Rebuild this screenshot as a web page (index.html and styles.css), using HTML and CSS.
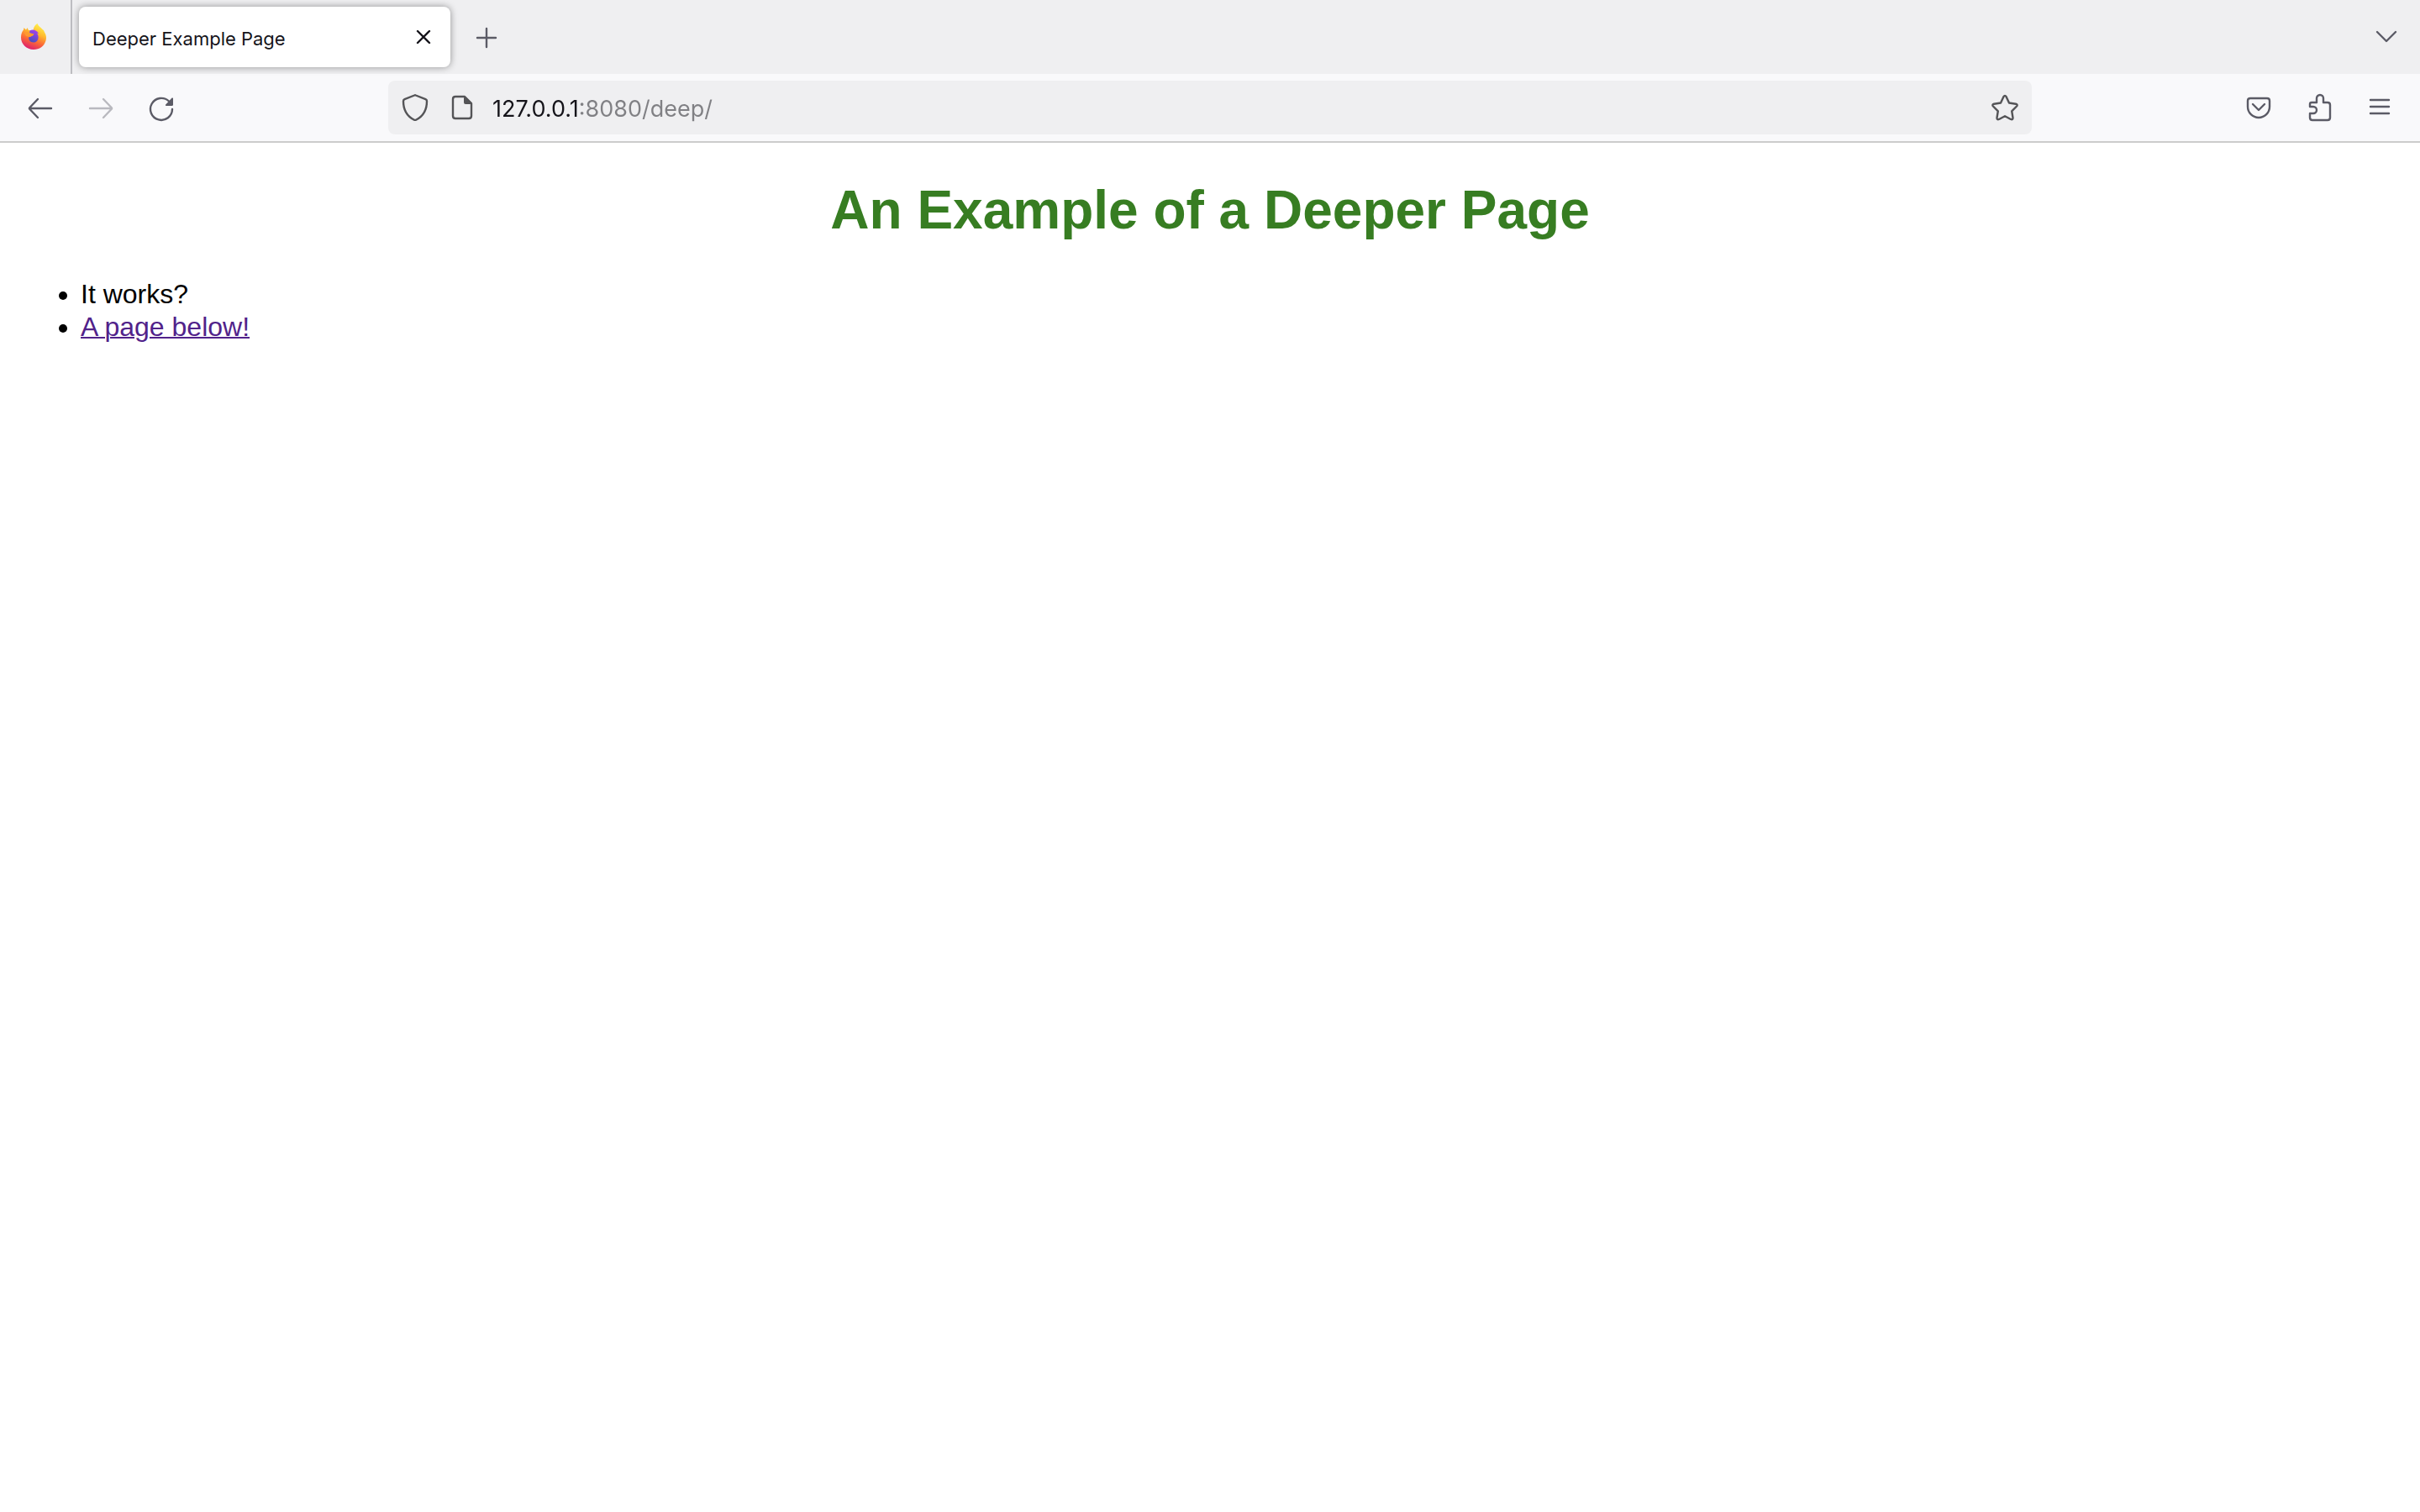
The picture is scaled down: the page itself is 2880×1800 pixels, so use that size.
FILE: index.html
```html
<!DOCTYPE html>
<html lang="en">
<head>
<meta charset="utf-8">
<title>Deeper Example Page</title>
<link rel="stylesheet" href="styles.css">
</head>
<body>
<header class="browser">
  <div class="tab-bar">
    <button class="firefox-view" aria-label="Firefox View">
      <svg class="icon" viewBox="0 0 32 32">
        <defs>
          <linearGradient id="flame" x1="0.75" y1="0.05" x2="0.35" y2="1">
            <stop offset="0" stop-color="#fff04c"/>
            <stop offset="0.35" stop-color="#ffb92f"/>
            <stop offset="0.65" stop-color="#fb6a36"/>
            <stop offset="1" stop-color="#dd1c70"/>
          </linearGradient>
          <linearGradient id="globe" x1="0.7" y1="0" x2="0.3" y2="1">
            <stop offset="0" stop-color="#a540f0"/>
            <stop offset="1" stop-color="#4550bd"/>
          </linearGradient>
        </defs>
        <path fill="url(#flame)" d="M20.500 0C22 4 25 4.500 27 7.500C28 7.500 28.500 9 29 10.500C31 13 31.500 17 30.500 20.500C28.500 27 23 31 16 31C7.500 31 1 24.500 1 16.500C1 12 2.500 9.500 4 7.500L4.500 5L7 7.500L8.500 5L10 8L15.500 8C16 4 18 1.500 20.500 0Z"/>
        <path fill="url(#globe)" d="M11.500 8.500C15 6.500 20 8 22 12L20 11.500C23 15 22 22.500 16 22.500C12 22.500 10 19.500 10 16.500L15 14.500L16 12.500L11 11Z"/>
        <path fill="#ff9a2f" d="M5 11C7 9 9 10 11 11.800L16.500 12.300C16 14.500 13.500 14.500 12 16L7 15Z"/>
      </svg>
    </button>
    <div class="tab">
      <span class="tab-title">Deeper Example Page</span>
      <button class="tab-close" aria-label="Close tab">
        <svg class="icon" viewBox="0 0 32 32"><path class="line" d="M9 9 23 23M23 9 9 23"/></svg>
      </button>
    </div>
    <button class="tool new-tab" aria-label="New tab">
      <svg class="icon" viewBox="0 0 32 32"><path class="line" d="M16 6V28M5 17H27"/></svg>
    </button>
    <button class="tool all-tabs" aria-label="List all tabs">
      <svg class="icon" viewBox="0 0 32 32"><path class="line" d="M5 10 16 21 27 10"/></svg>
    </button>
  </div>
  <nav class="nav-bar" aria-label="Navigation">
    <div class="tools">
      <button class="tool" aria-label="Back">
        <svg class="icon" viewBox="0 0 32 32"><path class="line" d="M29 17H3M13 6 3 16.500V17.500L13 28"/></svg>
      </button>
      <button class="tool" aria-label="Forward" disabled>
        <svg class="icon" viewBox="0 0 32 32"><path class="line" d="M3 17H29M19 6 29 16.500V17.500L19 28"/></svg>
      </button>
      <button class="tool" aria-label="Reload">
        <svg class="icon" viewBox="0 0 32 32"><path class="line" d="M29 18A13 13 0 1 1 25 8.500"/><path fill="currentColor" d="M30 5V12.500Q30 14 28.500 14H21.500Q20.500 13.500 21.200 12.500L28.600 4.600Q30 4 30 5Z"/></svg>
      </button>
    </div>
    <div class="address">
      <svg class="icon" viewBox="0 0 32 32"><path class="line" d="M15.200 1.500 3.500 6.200Q2 6.800 2 8.500C2 18 5 25.500 14.500 30.500Q16 31.300 17.500 30.500C27 25.500 30 18 30 8.500Q30 6.800 28.500 6.200L16.800 1.500Q16 1 15.200 1.500Z"/></svg>
      <svg class="icon page-icon" viewBox="0 0 32 32"><path class="line" d="M8 3H19L27 11V26Q27 29 24 29H8Q5 29 5 26V6Q5 3 8 3Z"/><path fill="currentColor" d="M18 3H20L27.500 10.500V12H20Q18 12 18 10Z"/></svg>
      <input class="url" type="text" aria-label="Address" value="127.0.0.1:8080/deep/">
      <button class="bookmark" aria-label="Bookmark this page">
        <svg class="icon" viewBox="0 0 32 32"><path class="line" d="M14.500 3Q16 .8 17.500 3L21 10.500 29 11.700Q31.700 12.500 30 14.500L24.200 20.300 25.500 28.300Q25.500 31 23 30L16 26.300 9 30Q6.500 31 6.500 28.300L7.800 20.300 2 14.500Q.3 12.500 3 11.700L11 10.500Z"/></svg>
      </button>
    </div>
    <div class="tools tools-end">
      <button class="tool" aria-label="Save to Pocket">
        <svg class="icon" viewBox="0 0 32 32"><path class="line" d="M6 5H26Q29 5 29 8V15A13 13 0 0 1 3 15V8Q3 5 6 5ZM9 12 16 19 23 12"/></svg>
      </button>
      <button class="tool" aria-label="Extensions">
        <svg class="icon" viewBox="0 0 32 32"><path class="line" d="M7 10H13V5A4 4 0 0 1 21 5V10H26Q29 10 29 13V28Q29 31 26 31H8Q5 31 5 28V23H9A4 4 0 0 0 9 15H5V12Q5 10 7 10Z"/></svg>
      </button>
      <button class="tool" aria-label="Menu">
        <svg class="icon" viewBox="0 0 32 32"><path class="line" d="M5 7H27M5 15H27M5 23H27"/></svg>
      </button>
    </div>
  </nav>
</header>
<main class="page">
  <h1 class="heading">An Example of a Deeper Page</h1>
  <ul class="list">
    <li>It works?</li>
    <li><a class="visited" href="below/">A page below!</a></li>
  </ul>
</main>
</body>
</html>
```
FILE: styles.css
```css
* {
  box-sizing: border-box;
}

body {
  margin: 0;
  background: #fff;
  color: #000;
  font-family: "Liberation Sans", Arial, sans-serif;
  font-size: 32px;
  line-height: 39px;
}

button {
  display: flex;
  align-items: center;
  justify-content: center;
  padding: 0;
  border: 0;
  background: none;
  color: inherit;
}

.browser {
  border-bottom: 2px solid #ccc;
  background: #f9f9fb;
  color: #5b5b66;
  font-family: Inter, sans-serif;
}

.icon {
  display: block;
  flex: none;
  width: 32px;
  height: 32px;
  overflow: visible;
}

.line {
  fill: none;
  stroke: currentColor;
  stroke-width: 2.4;
  stroke-linecap: round;
  stroke-linejoin: round;
}

.tab-bar {
  display: flex;
  align-items: center;
  height: 88px;
  padding-right: 8px;
  background: #efeff1;
}

.firefox-view {
  width: 86px;
  height: 88px;
  padding-right: 4px;
  border-right: 2px solid #bdbdc1;
}

.tab {
  display: flex;
  align-items: center;
  width: 442px;
  height: 72px;
  margin-left: 8px;
  padding: 0 8px 0 16px;
  border-radius: 8px;
  background: #fff;
  box-shadow: 0 0 8px rgba(0, 0, 0, 0.4);
  color: #15141a;
}

.tab-title {
  flex: 1;
  font-size: 22px;
  line-height: 28px;
  padding-top: 4px;
}

.tab-close {
  width: 48px;
  height: 48px;
}

.tool {
  width: 64px;
  height: 64px;
}

.tool:disabled {
  opacity: 0.4;
}

.new-tab {
  margin-left: 11px;
}

.all-tabs {
  margin-left: auto;
}

.nav-bar {
  display: flex;
  align-items: center;
  justify-content: space-between;
  height: 80px;
  padding: 0 16px;
}

.tools {
  display: flex;
  gap: 8px;
  width: 446px;
}

.tools-end {
  justify-content: flex-end;
}

.address {
  display: flex;
  flex: 1;
  align-items: center;
  height: 64px;
  padding: 0 16px;
  border-radius: 8px;
  background: #efeff1;
  color: #545457;
}

.page-icon {
  margin-left: 24px;
}

.url {
  flex: 1;
  min-width: 0;
  height: 40px;
  margin-left: 20px;
  padding: 2px 0 0;
  border: 0;
  outline: 0;
  /* The host is dark; the port and path after it are grey. */
  background: linear-gradient(90deg, #15141a 105px, #808084 105px);
  -webkit-background-clip: text;
  background-clip: text;
  color: transparent;
  font-family: inherit;
  font-size: 27px;
}

.page {
  padding: 1px 16px;
}

.heading {
  margin: 42px 0 44px;
  color: #377d22;
  font-size: 64px;
  line-height: 74px;
  text-align: center;
}

.list {
  margin: 0;
  padding-left: 80px;
}

.visited {
  color: #51228a;
  text-decoration-thickness: 2px;
}
```
